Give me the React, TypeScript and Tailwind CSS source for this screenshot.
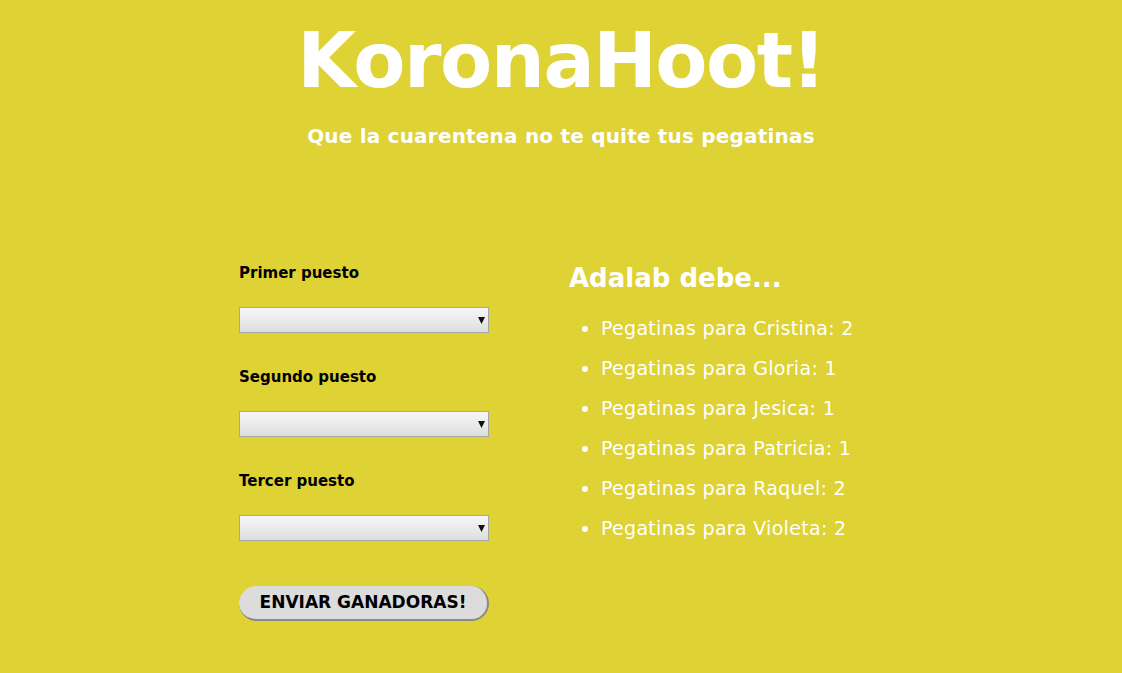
import React from 'react';

const positions = ['Primer puesto', 'Segundo puesto', 'Tercer puesto'];

const debts = [
  { name: 'Cristina', count: 2 },
  { name: 'Gloria', count: 1 },
  { name: 'Jesica', count: 1 },
  { name: 'Patricia', count: 1 },
  { name: 'Raquel', count: 2 },
  { name: 'Violeta', count: 2 },
];

const Select = () => (
  <div className="relative w-[250px] h-[26px]">
    <select className="appearance-none w-full h-full border border-[#a6a6a6] bg-gradient-to-b from-[#f7f7f7] to-[#dedede] rounded-none outline-none" />
    <svg className="absolute right-[4px] top-[10px] pointer-events-none" width="7" height="7" viewBox="0 0 7 7">
      <path d="M0 0 L7 0 L3.5 7 Z" fill="#111" />
    </svg>
  </div>
);

const App = () => {
  return (
    <div className="min-h-[673px] w-full bg-[#ded234] font-['DejaVu_Sans',sans-serif]">
      <header className="text-center text-white pt-[16px]">
        <h1 className="text-[76px] leading-[90px] font-bold tracking-[-1.5px]">KoronaHoot!</h1>
        <h2 className="mt-[17px] text-[20px] leading-[26px] font-bold tracking-[0.2px]">Que la cuarentena no te quite tus pegatinas</h2>
      </header>

      <main className="flex justify-center gap-[80px] mt-[114px]">
        <form className="w-[250px] flex flex-col">
          {positions.map((p, i) => (
            <div key={p} className={i > 0 ? 'mt-[34px]' : ''}>
              <label className="block text-[15px] leading-[20px] font-bold text-black mb-[24px]">{p}</label>
              <Select />
            </div>
          ))}
          <button
            type="button"
            className="mt-[45px] w-[250px] h-[35px] rounded-full bg-[#dcdcdc] text-black text-[17px] font-bold border-r-2 border-b-2 border-[#8a8a8a]"
          >
            ENVIAR GANADORAS!
          </button>
        </form>

        <section className="w-[314px] text-white">
          <h3 className="text-[26px] leading-[30px] font-bold">Adalab debe...</h3>
          <ul className="mt-[15px] list-disc pl-[32px]">
            {debts.map((d) => (
              <li key={d.name} className="text-[19px] leading-[40px] font-normal tracking-[0.3px]">
                Pegatinas para {d.name}: {d.count}
              </li>
            ))}
          </ul>
        </section>
      </main>
    </div>
  );
};

export default App;
